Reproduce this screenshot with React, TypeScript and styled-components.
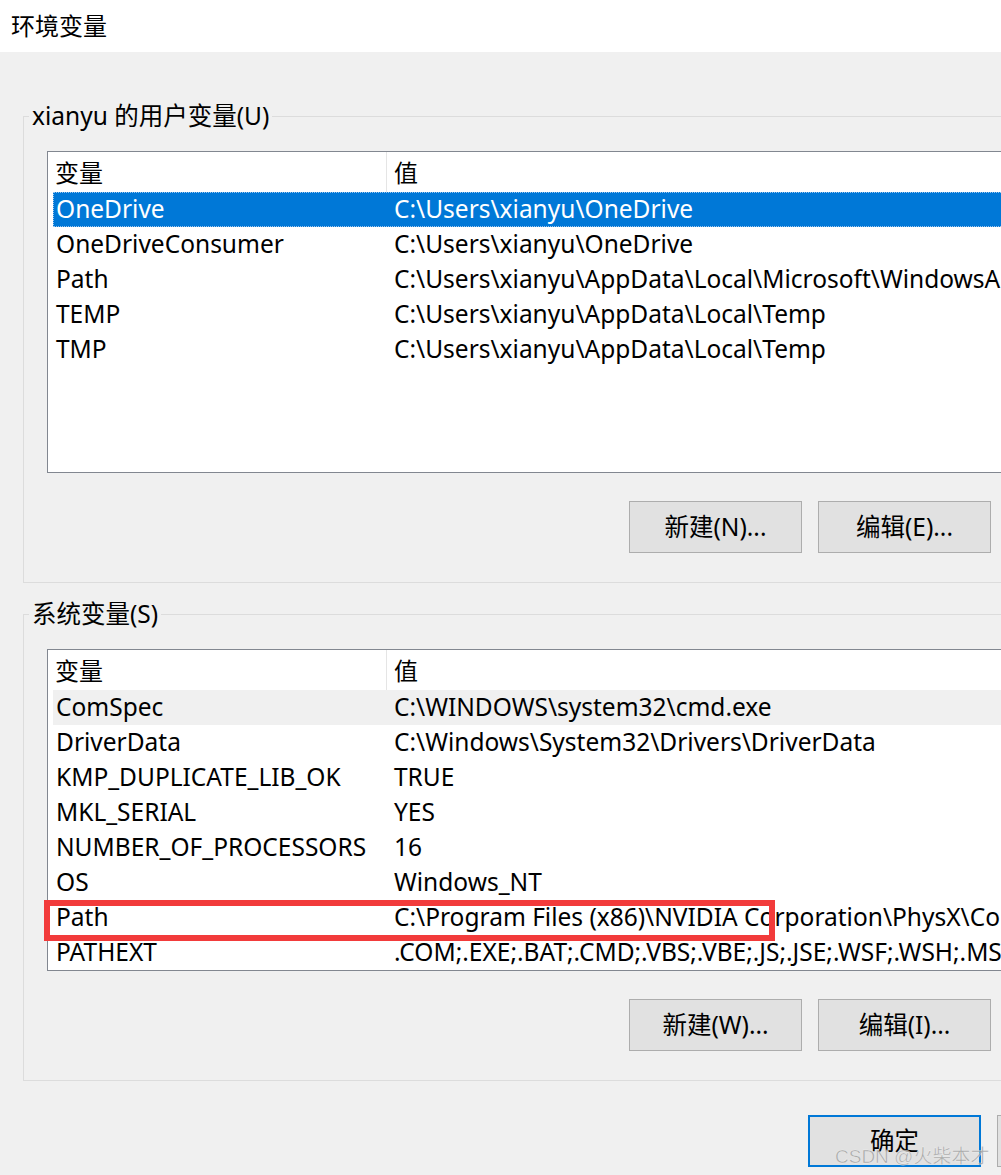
import React from "react";
import styled, { createGlobalStyle } from "styled-components";

const Global = createGlobalStyle`
  html, body {
    margin: 0;
    padding: 0;
    overflow: hidden;
    background: #f0f0f0;
  }
  body {
    font-family: "Noto Sans", "Noto Sans CJK SC", sans-serif;
    color: #000;
  }
`;

const FONT = `"Noto Sans", "Noto Sans CJK SC", sans-serif`;
const FS = "24.5px";

const Window = styled.div`
  width: 1227px;
  height: 1175px;
  display: flex;
  flex-direction: column;
  background: #f0f0f0;
  font-family: ${FONT};
  font-size: ${FS};
`;

const TitleBar = styled.div`
  height: 52px;
  background: #ffffff;
  display: flex;
  align-items: center;
  padding-left: 11px;
  padding-bottom: 4px;
  box-sizing: border-box;
  font-size: 24px;
`;

const Body = styled.div`
  padding: 64px 23px 0 23px;
  display: flex;
  flex-direction: column;
`;

const GroupBox = styled.section<{ $gapTop?: number }>`
  border: 1px solid #dcdcdc;
  margin-top: ${(p) => p.$gapTop ?? 0}px;
  padding: 0 23px 29px 23px;
  display: flex;
  flex-direction: column;
`;

const GroupLabel = styled.div`
  align-self: flex-start;
  margin: -17px 0 0 -18px;
  padding: 0 3px;
  background: #f0f0f0;
  line-height: 32px;
  height: 32px;
`;

const List = styled.div`
  margin-top: 19px;
  height: 322px;
  box-sizing: border-box;
  border: 1px solid #828790;
  background: #ffffff;
  display: flex;
  flex-direction: column;
`;

const HeaderRow = styled.div`
  height: 40px;
  display: grid;
  grid-template-columns: 339px 1fr;
  flex-shrink: 0;
`;

const HeaderCell = styled.div<{ $sep?: boolean }>`
  display: flex;
  align-items: center;
  padding-left: 7px;
  border-right: ${(p) => (p.$sep ? "1px solid #e5e5e5" : "none")};
  font-size: 24px;
  padding-bottom: 2px;
`;

const Rows = styled.div`
  display: flex;
  flex-direction: column;
  padding-left: 5px;
`;

const Row = styled.div<{ $state?: "selected" | "hover" | "normal" }>`
  position: relative;
  height: 35px;
  box-sizing: border-box;
  display: grid;
  grid-template-columns: 334px 1fr;
  align-items: center;
  white-space: nowrap;
  background: ${(p) =>
    p.$state === "selected" ? "#0078d7" : p.$state === "hover" ? "#f0f0f0" : "transparent"};
  color: ${(p) => (p.$state === "selected" ? "#ffffff" : "#000000")};
  outline: ${(p) => (p.$state === "selected" ? "1px dotted #9cc6ee" : "none")};
  outline-offset: -1px;
`;

const Cell = styled.div`
  padding-left: 3px;
  padding-bottom: 2px;
`;

const ValueCell = styled.div`
  padding-left: 7px;
  padding-bottom: 2px;
`;

const Highlight = styled.div`
  position: absolute;
  left: -9px;
  top: 0;
  width: 731px;
  height: 41px;
  box-sizing: border-box;
  border: 6px solid #f23b3b;
  pointer-events: none;
`;

const ButtonRow = styled.div<{ $right?: number; $top?: number }>`
  display: flex;
  justify-content: flex-end;
  gap: 16px;
  margin-top: ${(p) => p.$top ?? 28}px;
  margin-right: ${(p) => p.$right ?? 0}px;
`;

const Button = styled.button<{ $default?: boolean }>`
  width: 173px;
  height: 52px;
  box-sizing: border-box;
  background: #e1e1e1;
  border: ${(p) => (p.$default ? "2px solid #0078d7" : "1px solid #adadad")};
  font-family: ${FONT};
  font-size: ${FS};
  color: #000;
  padding: 0 0 3px 0;
  margin: 0;
  position: relative;
`;

const Watermark = styled.div`
  position: absolute;
  left: 25px;
  top: 24px;
  white-space: nowrap;
  font-family: "Liberation Sans", "Noto Sans CJK SC", sans-serif;
  font-size: 19px;
  color: rgba(150, 150, 150, 0.75);
  -webkit-text-stroke: 0.5px rgba(255, 255, 255, 0.6);
  pointer-events: none;
`;

type Item = { name: string; value: string; state?: "selected" | "hover"; mark?: boolean };

const userVars: Item[] = [
  { name: "OneDrive", value: "C:\\Users\\xianyu\\OneDrive", state: "selected" },
  { name: "OneDriveConsumer", value: "C:\\Users\\xianyu\\OneDrive" },
  { name: "Path", value: "C:\\Users\\xianyu\\AppData\\Local\\Microsoft\\WindowsApps;" },
  { name: "TEMP", value: "C:\\Users\\xianyu\\AppData\\Local\\Temp" },
  { name: "TMP", value: "C:\\Users\\xianyu\\AppData\\Local\\Temp" },
];

const sysVars: Item[] = [
  { name: "ComSpec", value: "C:\\WINDOWS\\system32\\cmd.exe", state: "hover" },
  { name: "DriverData", value: "C:\\Windows\\System32\\Drivers\\DriverData" },
  { name: "KMP_DUPLICATE_LIB_OK", value: "TRUE" },
  { name: "MKL_SERIAL", value: "YES" },
  { name: "NUMBER_OF_PROCESSORS", value: "16" },
  { name: "OS", value: "Windows_NT" },
  {
    name: "Path",
    value: "C:\\Program Files (x86)\\NVIDIA Corporation\\PhysX\\Common;C:\\WINDOWS\\system32",
    mark: true,
  },
  { name: "PATHEXT", value: ".COM;.EXE;.BAT;.CMD;.VBS;.VBE;.JS;.JSE;.WSF;.WSH;.MSC" },
];

function VarList({ items }: { items: Item[] }) {
  return (
    <List>
      <HeaderRow>
        <HeaderCell $sep>变量</HeaderCell>
        <HeaderCell>值</HeaderCell>
      </HeaderRow>
      <Rows>
        {items.map((it) => (
          <Row key={it.name} $state={it.state}>
            <Cell>{it.name}</Cell>
            <ValueCell>{it.value}</ValueCell>
            {it.mark && <Highlight />}
          </Row>
        ))}
      </Rows>
    </List>
  );
}

export default function App() {
  return (
    <Window>
      <Global />
      <TitleBar>环境变量</TitleBar>
      <Body>
        <GroupBox>
          <GroupLabel>xianyu 的用户变量(U)</GroupLabel>
          <VarList items={userVars} />
          <ButtonRow>
            <Button>新建(N)...</Button>
            <Button>编辑(E)...</Button>
            <Button>删除(D)</Button>
          </ButtonRow>
        </GroupBox>
        <GroupBox $gapTop={31}>
          <GroupLabel>系统变量(S)</GroupLabel>
          <VarList items={sysVars} />
          <ButtonRow>
            <Button>新建(W)...</Button>
            <Button>编辑(I)...</Button>
            <Button>删除(L)</Button>
          </ButtonRow>
        </GroupBox>
        <ButtonRow $right={34} $top={34}>
          <Button $default>
            确定
            <Watermark>CSDN @火柴本才</Watermark>
          </Button>
          <Button>取消</Button>
        </ButtonRow>
      </Body>
    </Window>
  );
}
